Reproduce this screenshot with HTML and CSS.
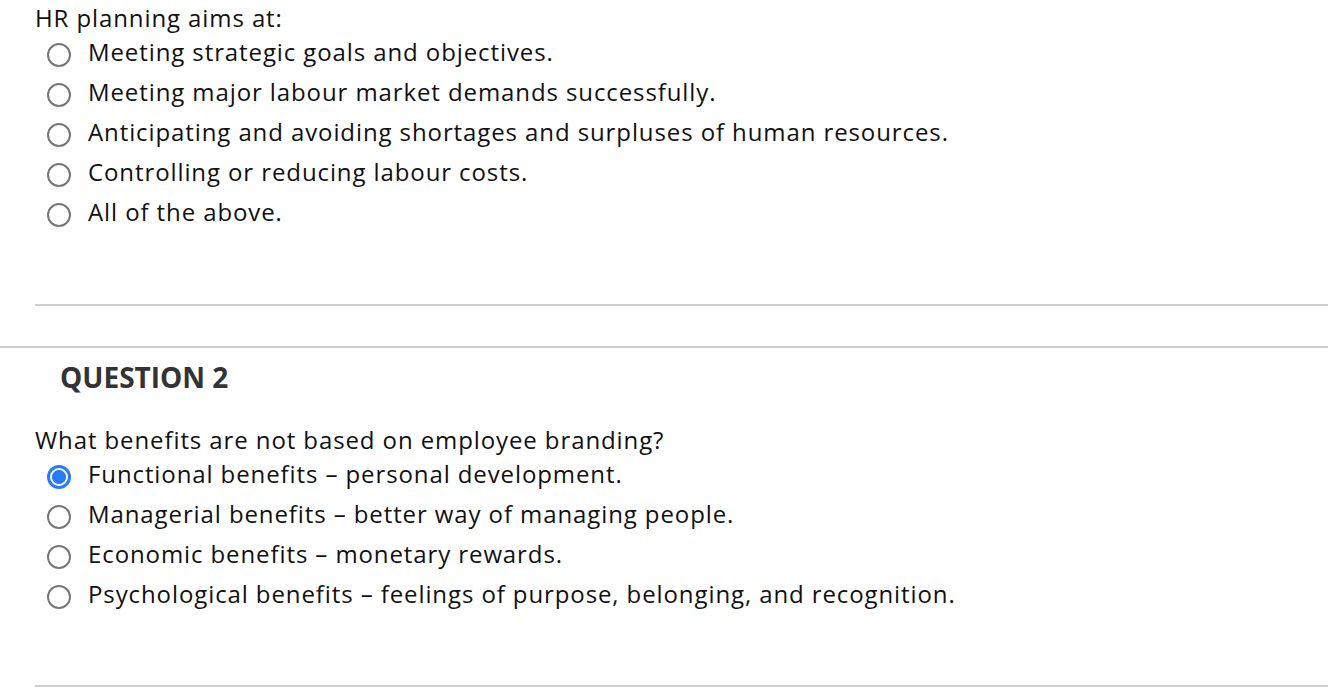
FILE: index.html
```html
<!DOCTYPE html>
<html>
<head>
<meta charset="utf-8">
<link rel="stylesheet" href="styles.css">
</head>
<body>
<div class="block">
  <div class="qtext">HR planning aims at:</div>
  <ul class="opts">
    <li><span class="radio"></span><span>Meeting strategic goals and objectives.</span></li>
    <li><span class="radio"></span><span>Meeting major labour market demands successfully.</span></li>
    <li><span class="radio"></span><span>Anticipating and avoiding shortages and surpluses of human resources.</span></li>
    <li><span class="radio"></span><span>Controlling or reducing labour costs.</span></li>
    <li><span class="radio"></span><span>All of the above.</span></li>
  </ul>
  <div class="rule rule-a"></div>
</div>
<div class="rule rule-full"></div>
<div class="block">
  <h2 class="qhead">QUESTION 2</h2>
  <div class="qtext q2">What benefits are not based on employee branding?</div>
  <ul class="opts">
    <li><span class="radio checked"></span><span>Functional benefits – personal development.</span></li>
    <li><span class="radio"></span><span>Managerial benefits – better way of managing people.</span></li>
    <li><span class="radio"></span><span>Economic benefits – monetary rewards.</span></li>
    <li><span class="radio"></span><span>Psychological benefits – feelings of purpose, belonging, and recognition.</span></li>
  </ul>
  <div class="rule rule-b"></div>
</div>
</body>
</html>
```
FILE: styles.css
```css
html, body {
  margin: 0;
  padding: 0;
  background: #fff;
}
body {
  font-family: "Open Sans", "Liberation Sans", sans-serif;
  font-size: 24px;
  letter-spacing: 0.9px;
  color: #111;
  overflow: hidden;
}
.block {
  padding-left: 35px;
}
.qtext {
  height: 32px;
  line-height: 36px;
}
.q2 {
  margin-top: 30px;
}
.opts {
  list-style: none;
  margin: 0;
  padding: 0 0 0 12px;
}
.opts li {
  display: flex;
  align-items: center;
  height: 40px;
  line-height: 40px;
  gap: 17px;
}
.radio {
  width: 20px;
  height: 20px;
  margin-top: 6px;
  border: 2px solid #777;
  border-radius: 50%;
  box-sizing: content-box;
  flex: none;
  background: #fff;
}
.radio.checked {
  border: 3px solid #2a7cf5;
  width: 18px;
  height: 18px;
  background: radial-gradient(circle, #2a7cf5 0 6.6px, #fff 7.4px);
}
.rule {
  height: 2px;
  background: #cfcfcf;
}
.rule-a {
  margin-top: 72px;
}
.rule-full {
  margin-top: 40px;
}
.qhead {
  margin: 14px 0 0 25px;
  font-size: 28px;
  line-height: 30px;
  letter-spacing: 0;
  font-weight: 700;
  color: #333;
}
.rule-b {
  margin-top: 71px;
}
```
